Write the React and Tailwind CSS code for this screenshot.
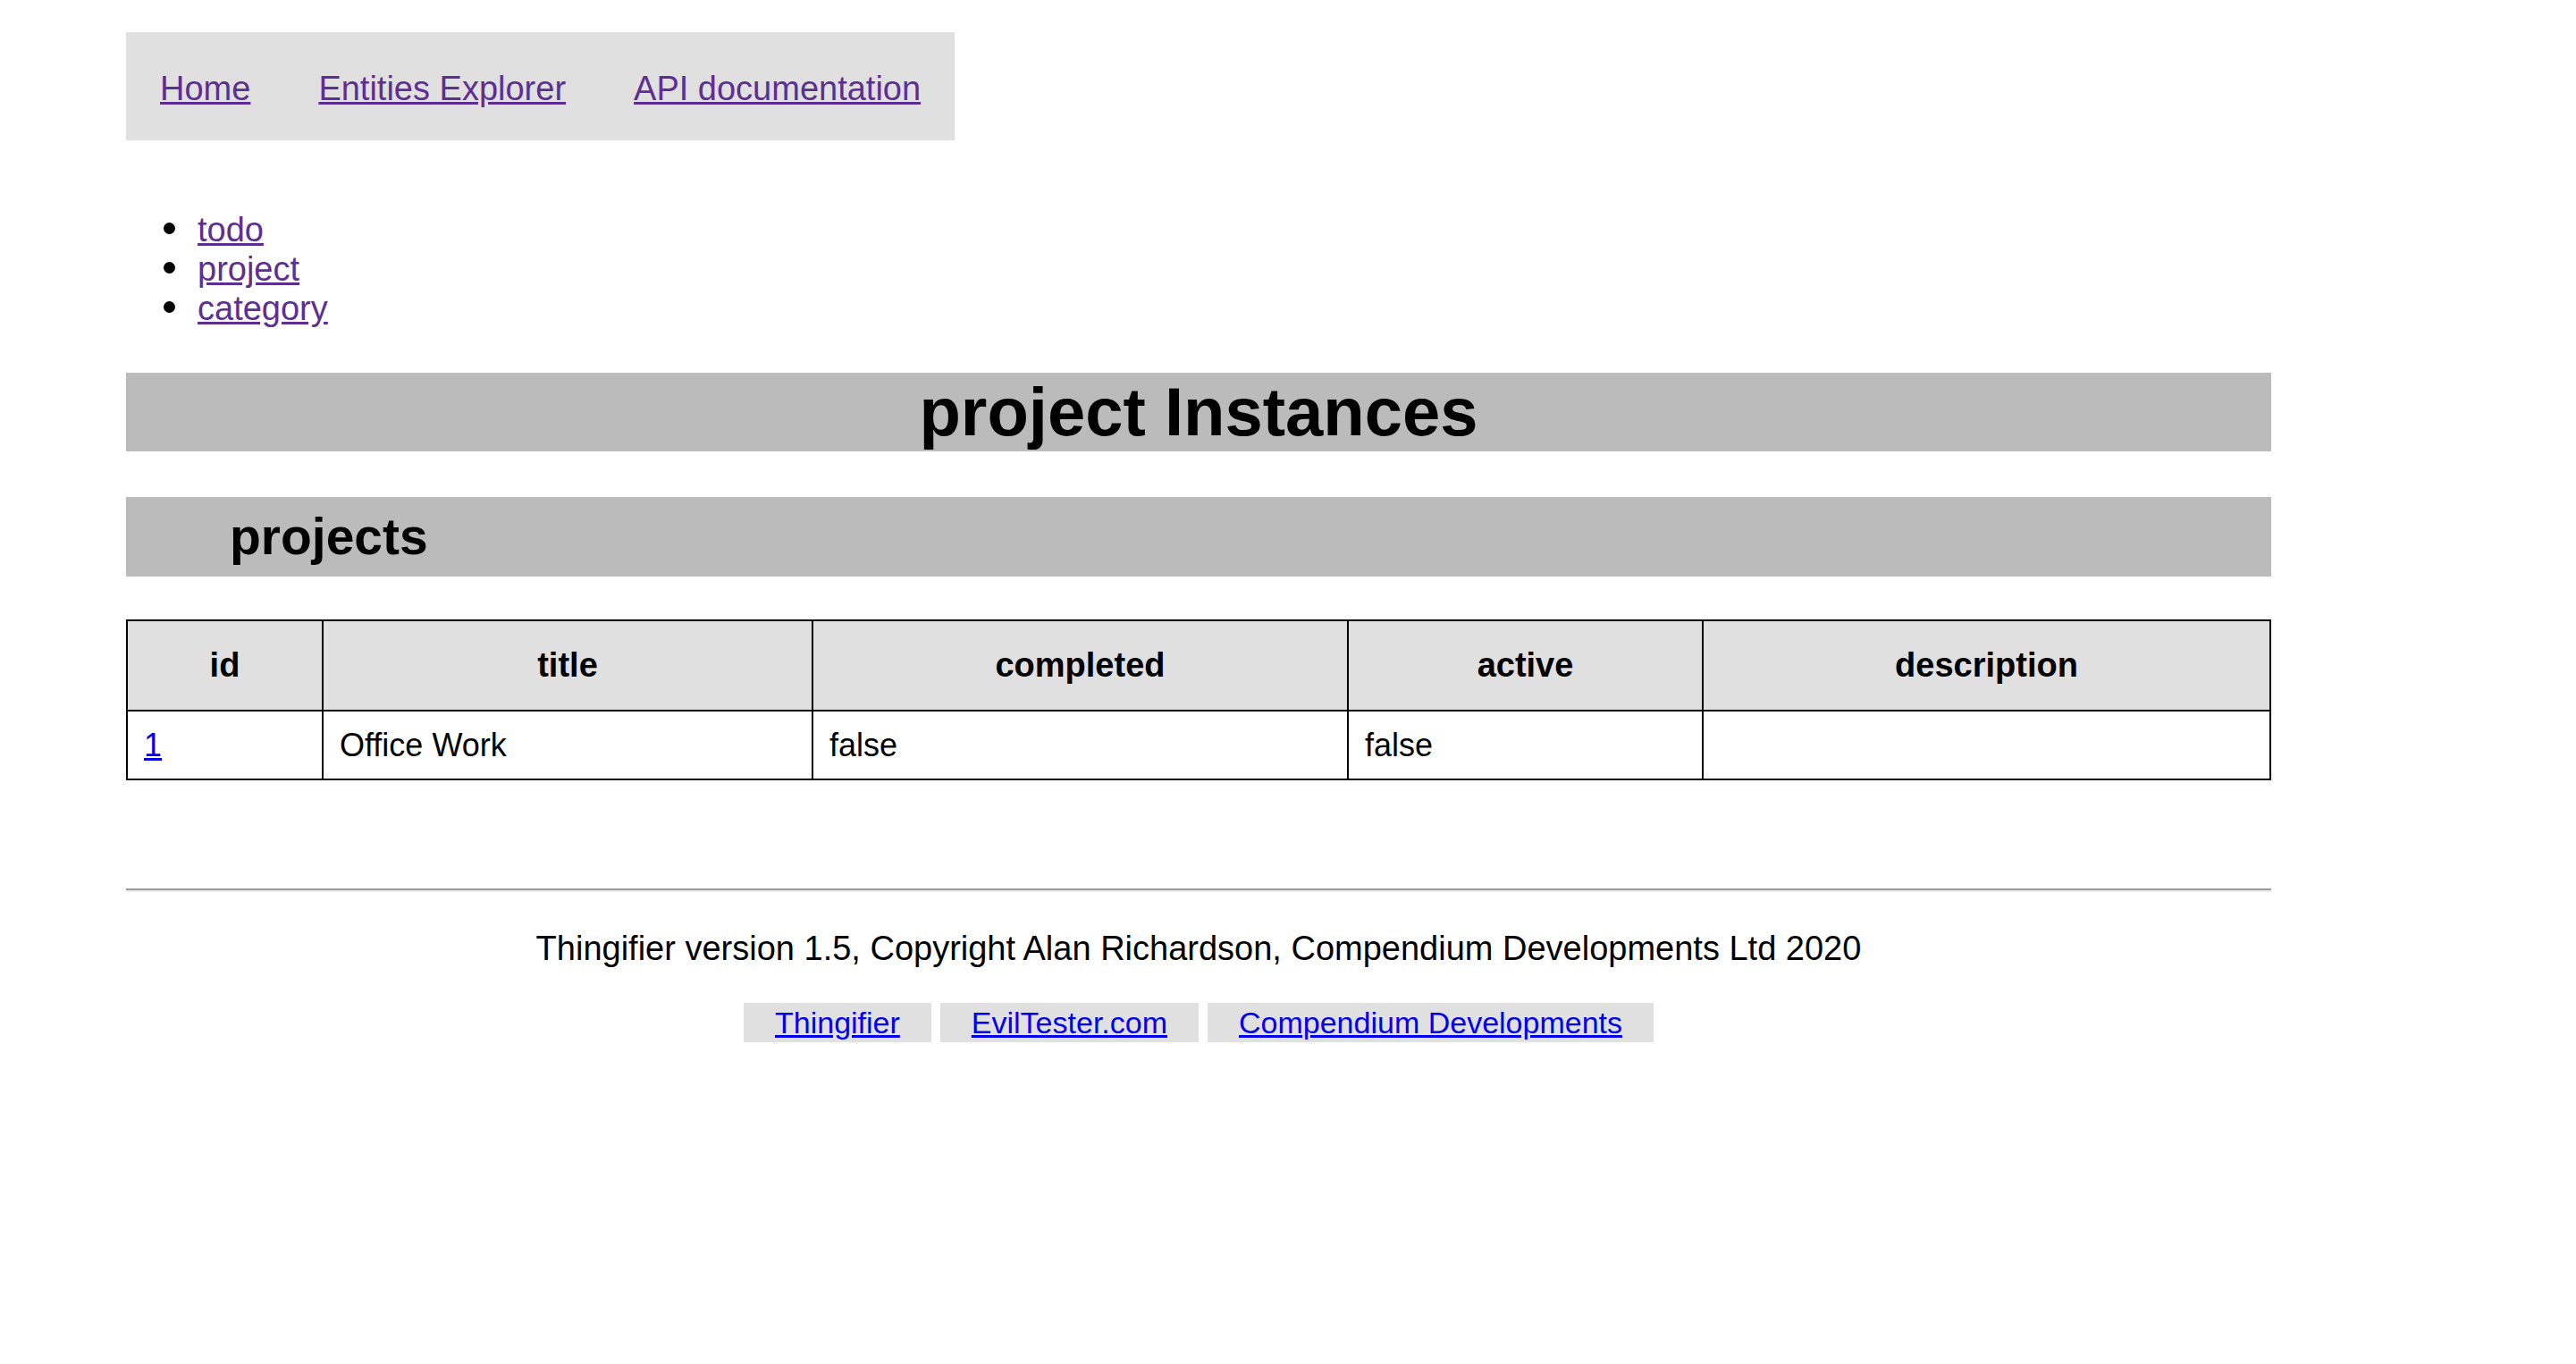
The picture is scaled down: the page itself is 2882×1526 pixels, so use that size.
import React from 'react';

const columns = [
  { name: 'id', width: 'w-[219px]' },
  { name: 'title', width: 'w-[548px]' },
  { name: 'completed', width: 'w-[599px]' },
  { name: 'active', width: 'w-[397px]' },
  { name: 'description', width: 'w-[635px]' },
];

const entities = ['todo', 'project', 'category'];

const projects = [{ id: 1, title: 'Office Work', completed: 'false', active: 'false', description: '' }];

const App = () => {
  return (
    <div className="min-h-screen bg-white text-black font-['Liberation_Sans',Arial,sans-serif]">
      <div className="ml-[141px] w-[2400px] pt-[36px]">
        <nav className="inline-block bg-[#e0e0e0] pt-[41px] pb-[36px] text-[38px] leading-[44px]">
          <a href="#" className="px-[38px] text-[#5e2e93] underline">Home</a>
          <a href="#" className="px-[38px] text-[#5e2e93] underline">Entities Explorer</a>
          <a href="#" className="px-[38px] text-[#5e2e93] underline">API documentation</a>
        </nav>

        <ul className="mt-[78px] pl-[42px] text-[38px] leading-[44px]">
          {entities.map((name) => (
            <li key={name}>
              <span className="mr-[25px] inline-block h-[13px] w-[13px] rounded-full bg-black align-[8px]" />
              <a href="#" className="text-[#5e2e93] underline">{name}</a>
            </li>
          ))}
        </ul>

        <h1 className="mt-[50px] bg-[#bbbbbb] text-center text-[76px] font-bold leading-[88px]">
          project Instances
        </h1>

        <h2 className="mt-[51px] bg-[#bbbbbb] pl-[116px] py-[11px] text-[57px] font-bold leading-[67px]">
          projects
        </h2>

        <table className="mt-[48px] w-[2398px] table-fixed border-collapse border-2 border-black">
          <thead>
            <tr className="bg-[#e0e0e0]">
              {columns.map((col) => (
                <th
                  key={col.name}
                  className={`${col.width} border-2 border-black py-[27px] text-center text-[38px] font-bold leading-[45px]`}
                >
                  {col.name}
                </th>
              ))}
            </tr>
          </thead>
          <tbody>
            {projects.map((project) => (
              <tr key={project.id} className="text-[36px] leading-[41px]">
                <td className="border-2 border-black px-[18px] py-[17px]">
                  <a href="#" className="text-[#0000ee] underline">{project.id}</a>
                </td>
                <td className="border-2 border-black px-[18px] py-[17px]">{project.title}</td>
                <td className="border-2 border-black px-[18px] py-[17px]">{project.completed}</td>
                <td className="border-2 border-black px-[18px] py-[17px]">{project.active}</td>
                <td className="border-2 border-black px-[18px] py-[17px]">{project.description}</td>
              </tr>
            ))}
          </tbody>
        </table>

        <hr className="mt-[121px] border-t-2 border-b-2 border-t-[#9a9a9a] border-b-[#eeeeee]" />

        <p className="mt-[41px] text-center text-[38px] leading-[44px]">
          Thingifier version 1.5, Copyright Alan Richardson, Compendium Developments Ltd 2020
        </p>

        <div className="mt-[39px] flex justify-center gap-[10px] text-[34px] leading-[38px]">
          <span className="bg-[#e0e0e0] px-[35px] py-[3px]">
            <a href="#" className="text-[#0000ee] underline">Thingifier</a>
          </span>
          <span className="bg-[#e0e0e0] px-[35px] py-[3px]">
            <a href="#" className="text-[#0000ee] underline">EvilTester.com</a>
          </span>
          <span className="bg-[#e0e0e0] px-[35px] py-[3px]">
            <a href="#" className="text-[#0000ee] underline">Compendium Developments</a>
          </span>
        </div>
      </div>
    </div>
  );
};

export default App;
